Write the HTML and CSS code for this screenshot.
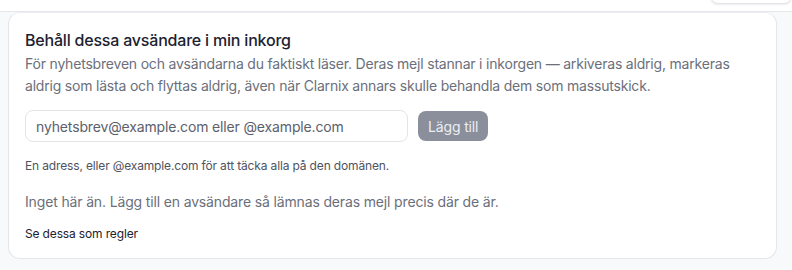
FILE: index.html
```html
<!DOCTYPE html>
<html lang="sv">
<head>
    <meta charset="UTF-8">
    <meta name="viewport" content="width=device-width, initial-scale=1.0">
    <title>Behåll avsändare</title>
    <link rel="stylesheet" href="styles.css">
</head>
<body>
    <div class="topbar">
        <div class="topbar-btn"></div>
    </div>
    <div class="page">
        <div class="card">
            <h2>Behåll dessa avsändare i min inkorg</h2>
            <p class="desc">För nyhetsbreven och avsändarna du faktiskt läser. Deras mejl stannar i inkorgen — arkiveras aldrig, markeras aldrig som lästa och flyttas aldrig, även när Clarnix annars skulle behandla dem som massutskick.</p>
            <form class="add-row">
                <input type="text" placeholder="nyhetsbrev@example.com eller @example.com">
                <button type="submit" disabled>Lägg till</button>
            </form>
            <p class="hint">En adress, eller @example.com för att täcka alla på den domänen.</p>
            <p class="empty">Inget här än. Lägg till en avsändare så lämnas deras mejl precis där de är.</p>
            <a class="rules" href="#">Se dessa som regler</a>
        </div>
    </div>
</body>
</html>
```

FILE: styles.css
```css
body {
    font-family: 'Inter', 'Noto Sans', sans-serif;
    background: #f8f9fb;
    margin: 0;
    color: #1d2130;
}
.topbar {
    height: 11px;
    background: #fff;
    border-bottom: 1px solid #e6e7eb;
    position: relative;
    overflow: hidden;
}
.topbar-btn {
    position: absolute;
    right: 0;
    top: -30px;
    width: 80px;
    height: 32px;
    border-radius: 8px;
    background: #fff;
    border: 1px solid #e2e4e9;
    box-shadow: 0 1px 2px rgba(0,0,0,0.08);
}
.page {
    padding: 0 15px 11px 8px;
}
.card {
    background: #fff;
    border: 1px solid #e4e6ea;
    border-top-color: #eceef1;
    border-radius: 12px;
    padding: 16px 16px 17px 16px;
}
h2 {
    margin: 0 0 2px;
    font-size: 16px;
    font-weight: 500;
    letter-spacing: -0.2px;
    line-height: 22px;
}
.desc {
    margin: 0;
    font-size: 14px;
    line-height: 22px;
    color: #6b6f7b;
    letter-spacing: -0.2px;
}
.add-row {
    display: flex;
    gap: 10px;
    margin-top: 13px;
    align-items: center;
}
.add-row input {
    width: 383px;
    height: 32px;
    box-sizing: border-box;
    border: 1px solid #e2e4e8;
    border-radius: 8px;
    padding: 0 10px;
    font-family: inherit;
    font-size: 14px;
    letter-spacing: -0.15px;
}
.add-row input::placeholder {
    color: #5c606c;
}
.add-row button {
    height: 30px;
    padding: 0 10px;
    border: none;
    border-radius: 8px;
    background: #8a8f9b;
    color: #eceef2;
    font-family: inherit;
    font-size: 14px;
    letter-spacing: -0.15px;
}
.hint {
    margin: 15px 0 0;
    font-size: 12px;
    line-height: 18px;
    color: #4f5360;
    letter-spacing: -0.15px;
}
.empty {
    margin: 16px 0 0;
    font-size: 14px;
    line-height: 22px;
    color: #6b6f7b;
    letter-spacing: -0.15px;
}
.rules {
    display: block;
    margin-top: 13px;
    font-size: 12px;
    color: #1d2130;
    text-decoration: none;
    letter-spacing: -0.15px;
}
```
